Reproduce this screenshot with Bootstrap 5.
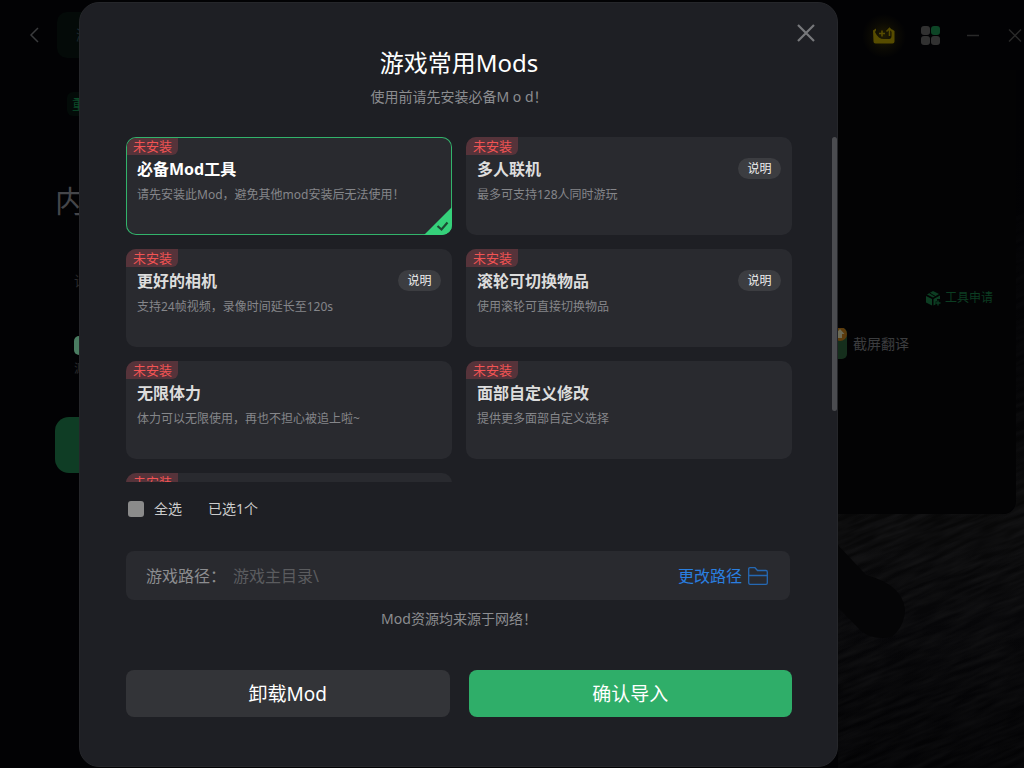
<!DOCTYPE html>
<html lang="zh-CN">
<head>
<meta charset="utf-8">
<meta name="viewport" content="width=device-width, initial-scale=1">
<title>游戏常用Mods</title>
<link href="https://cdn.jsdelivr.net/npm/bootstrap@5.3.0/dist/css/bootstrap.min.css" rel="stylesheet">
<style>
  body { background: #020204; color: #ddd; font-family: "Noto Sans", "Noto Sans CJK SC", sans-serif; font-size: 14px; line-height: 20px; }
  button, input { font-family: inherit; }
  .stage { display: grid; min-height: 100vh; overflow: hidden; }
  .stage > * { grid-area: 1 / 1; min-width: 0; }
  .plain { background: none; border: 0; padding: 0; line-height: 0; }

  /* dimmed launcher page */
  .launcher { display: grid; grid-template-rows: 70px 1fr; }
  .scene { width: 100%; height: 100%; }
  .topbar { padding: 0 2px 0 28px; }
  .tab-item { background: #040a08; color: #1b2930; border-radius: 10px; width: 120px; height: 46px; padding-left: 19px; font-size: 14px; display: flex; align-items: center; }
  .left-side { padding: 22px 0 0 55px; white-space: nowrap; }
  .hot-tag { background: #030b08; color: #0b4a28; border-radius: 6px; margin-left: 12px; padding: 2px 5px; font-size: 13px; display: inline-block; }
  .game-name { color: #45464a; font-size: 30px; line-height: 40px; margin: 65px 0 50px; font-weight: 400; }
  .dim-line { color: #29292b; padding-left: 19px; font-size: 14px; }
  .dim-note { font-size: 12px; }
  .toggle-chip { background: #4a7c61; border-radius: 5px; width: 36px; height: 19px; margin: 45px 0 4px 19px; }
  .start-btn { background: #0f3d25; border: 0; border-radius: 14px; width: 220px; height: 56px; margin-top: 38px; }
  .side-card { width: 188px; height: 444px; margin-right: 8px; background: #030304; border-radius: 0 0 14px 0; padding-top: 218px; }
  .apply-link { color: #0c3d22; font-size: 12px; text-decoration: none; margin-right: 23px; }
  .tool-line { color: #3c3d3f; margin-top: 20px; gap: 6px; height: 32px; }

  /* dialog */
  .sheet { background: #1e1f24; border: 1px solid #25262a; border-radius: 20px; margin: 2px 186px 1px 79px; display: flex; flex-direction: column; padding: 20px 0 48px 46px; }
  .sheet-head { padding-right: 21px; }
  .sheet-title { font-size: 24px; line-height: 32px; color: #fff; font-weight: 400; margin: 4px 0 8px; }
  .sheet-body { padding-right: 45px; }
  .muted { color: #8c8d90; }
  .list-row { margin-top: 30px; height: 345px; }
  .mods { display: grid; grid-template-columns: 1fr 1fr; grid-auto-rows: 98px; gap: 14px; overflow: hidden; flex: 1; }
  .thumb { width: 5px; height: 274px; border-radius: 3px; background: #4b4c50; margin-left: 40px; }
  .mod { background: #292a2f; border-radius: 10px; position: relative; overflow: hidden; padding: 21px 11px; display: block; }
  .mod.on { box-shadow: inset 0 0 0 1px #32b36b; }
  .state { position: absolute; left: 0; top: 0; background: #56333a; color: #f25454; font-size: 13px; line-height: 18px; padding: 0 6px 0 7px; border-radius: 0 0 6px 0; }
  .mod.on .state { left: 1px; top: 1px; border-top-left-radius: 9px; line-height: 17px; padding-left: 6px; }
  .mod h2 { font-size: 16px; line-height: 22px; font-weight: 700; color: #ddd; margin: 0 0 6px; }
  .mod.on h2 { color: #fff; }
  .mod p { font-size: 12px; line-height: 18px; color: #85868a; margin: 0; }
  .info { background: #3c3d41; color: #eee; border: 0; border-radius: 11px; width: 43px; height: 21px; font-size: 12px; line-height: 18px; padding: 0; }
  .corner { position: absolute; right: 0; bottom: 0; }
  .all-box { appearance: none; width: 16px; height: 16px; background: #8b8b8b; border-radius: 3px; margin: 0 10px 0 2px; }
  .select-row { margin-top: 17px; color: #ccc; gap: 26px; }
  .path-row { background: #292a2f; border-radius: 8px; height: 49px; margin: 32px 2px 0 0; padding: 0 22px 0 20px; gap: 7px; font-size: 16px; }
  .path-row input { background: none; border: 0; color: #5b5c5f; outline: 0; padding: 0; flex: 1; min-width: 0; }
  .path-row a { color: #2a7fe0; text-decoration: none; gap: 6px; }
  .source-note { margin-top: 9px; }
  .actions { margin-top: 41px; gap: 19px; }
  .act { border: 0; border-radius: 8px; height: 47px; font-size: 19px; color: #fff; flex: 1; padding: 0; }
  .act-gray { background: #333438; }
  .act-green { background: #2fae69; }
  .act-gray:hover { background: #3d3e43; color: #fff; }
  .act-green:hover { background: #35bd73; color: #fff; }
</style>
</head>
<body>
<div class="stage">
  <svg class="scene" viewBox="0 0 1024 768" preserveAspectRatio="none" aria-hidden="true">
    <defs>
      <filter id="grain" x="0" y="0" width="100%" height="100%" color-interpolation-filters="sRGB">
        <feTurbulence type="fractalNoise" baseFrequency="0.025 0.2" numOctaves="3" seed="4"/>
        <feColorMatrix values="0 0 0 0 .075  0 0 0 0 .075  0 0 0 0 .08  2 0 0 0 -.6"/>
      </filter>
      <linearGradient id="floor" x1="0" y1="0" x2="0" y2="1"><stop offset="0" stop-color="#020203"/><stop offset=".6" stop-color="#080808"/><stop offset=".8" stop-color="#08080a"/><stop offset="1" stop-color="#040405"/></linearGradient>
      <linearGradient id="fade" x1="0" y1="0" x2="0" y2="1"><stop offset="0" stop-color="#020204"/><stop offset=".5" stop-color="#020204" stop-opacity=".5"/><stop offset=".65" stop-color="#020204" stop-opacity="0"/><stop offset="1" stop-color="#020204" stop-opacity=".5"/></linearGradient>
      <clipPath id="ground"><path d="M838 514H1005Q1016 512 1016 500V80H1024V768H838Z"/></clipPath>
    </defs>
    <rect width="1024" height="768" fill="#020204"/>
    <g clip-path="url(#ground)">
      <rect x="838" y="80" width="186" height="688" fill="url(#floor)"/>
      <g transform="rotate(-22 930 640)"><rect x="680" y="280" width="560" height="700" filter="url(#grain)"/></g>
      <rect x="838" y="80" width="186" height="688" fill="url(#fade)"/>
    </g>
    <path d="M838 545L866 575Q903 585 905 610Q904 628 891 637Q873 641 860 630L838 607Z" fill="#050506"/>
  </svg>

  <div class="launcher" aria-hidden="true">
    <header class="topbar d-flex align-items-center justify-content-between">
      <div class="d-flex align-items-center gap-3">
        <svg width="13" height="16" viewBox="0 0 13 16" fill="none" stroke="#3a3b3d" stroke-width="1.5"><path d="M10 1L3 8L10 15"/></svg>
        <div class="tab-item">游</div>
      </div>
      <div class="d-flex align-items-center">
        <svg width="50" height="50" viewBox="859 12 50 50" class="me-2">
          <defs><radialGradient id="glow"><stop offset="0" stop-color="#4a4000" stop-opacity=".4"/><stop offset=".6" stop-color="#4a4000" stop-opacity=".12"/><stop offset="1" stop-color="#4a4000" stop-opacity="0"/></radialGradient></defs>
          <circle cx="884" cy="38" r="22" fill="url(#glow)"/>
          <path d="M873 32.500L876 30.500V32.500L875 34Q876.500 37.500 879 39.500Q881 41 884 41H889Q891.500 41 891.500 38V31L894.500 33V43.500Q894.500 45.500 892.500 45.500H875.500Q873.500 45.500 873.500 43.500Z" fill="#574c00"/>
          <path d="M882 32.500V38.500M879 35.500H885M889.500 38V31M886.500 33.500L889.500 30.500L892.500 33.500" fill="none" stroke="#574c00" stroke-width="1.600"/>
        </svg>
        <svg width="19" height="19" viewBox="0 0 19 19" fill="#313131" class="ms-1"><rect width="9" height="9" rx="3"/><rect x="10" width="9" height="9" rx="3" fill="#0d4526"/><rect y="10" width="9" height="9" rx="3"/><rect x="10" y="10" width="9" height="9" rx="3"/></svg>
        <svg width="82" height="14" viewBox="940 28 82 14" fill="none" stroke="#292929" stroke-width="1.500"><path d="M967 35.500H979M1009 29.500L1021 41.500M1021 29.500L1009 41.500"/></svg>
      </div>
    </header>
    <div class="d-flex justify-content-between align-items-start">
      <div class="left-side">
        <span class="hot-tag">重</span>
        <h1 class="game-name">内</h1>
        <div class="dim-line">请</div>
        <div class="toggle-chip"></div>
        <div class="dim-line dim-note">源</div>
        <button class="start-btn" type="button" tabindex="-1" aria-label="启动"></button>
      </div>
      <div class="side-card">
        <a href="#" tabindex="-1" class="apply-link d-flex align-items-center justify-content-end gap-1">
          <svg width="15" height="15" viewBox="0 0 15 15" fill="#0c3d22"><path d="M1 3.500L7 0L13 3L7 6.500Z"/><path d="M0 5L6 8V14.500L0 11.500Z"/><path d="M7.500 8L14 4.500V8H11V10.500H9.500V13.500L7.500 14.500Z"/><path d="M12 9.500V14.500M9.500 12H14.500" stroke="#0c3d22" stroke-width="1.300"/><path d="M3.500 2L9.500 5.500" stroke="#030304"/></svg>工具申请</a>
        <div class="tool-line d-flex align-items-center">
          <svg width="19" height="32" viewBox="828 328 19 32"><rect x="828" y="328" width="19" height="31" rx="5" fill="#152e1c"/><circle cx="840" cy="334" r="7" fill="#5c3b0c"/><path d="M840 329L844.500 334H842V338H838V334H835.500Z" fill="#6b6a55"/></svg>
          <span>截屏翻译</span>
        </div>
      </div>
    </div>
  </div>

  <main class="sheet" role="dialog" aria-labelledby="dlg-title">
    <div class="sheet-head d-flex justify-content-end">
      <button class="plain" type="button" aria-label="关闭"><svg width="20" height="20" viewBox="0 0 20 20" fill="none" stroke="#77787b" stroke-width="2.200"><path d="M2 2L18 18M18 2L2 18"/></svg></button>
    </div>
    <div class="sheet-body text-center">
      <h1 class="sheet-title" id="dlg-title">游戏常用Mods</h1>
      <div class="muted">使用前请先安装必备M o d！</div>
    </div>

    <div class="list-row d-flex align-items-start">
      <div class="mods h-100">
        <article class="mod on"><span class="state">未安装</span><h2>必备Mod工具</h2><p>请先安装此Mod，避免其他mod安装后无法使用！</p>
          <svg class="corner" width="28" height="28" viewBox="0 0 28 28"><path d="M28 0V28H0Z" fill="#35d07a"/><path d="M13.500 19L17.500 22.500L23.500 15.500" fill="none" stroke="#1c4a33" stroke-width="2.200"/></svg></article>
        <article class="mod"><span class="state">未安装</span><div class="d-flex justify-content-between"><h2>多人联机</h2><button class="info" type="button">说明</button></div><p>最多可支持128人同时游玩</p></article>
        <article class="mod"><span class="state">未安装</span><div class="d-flex justify-content-between"><h2>更好的相机</h2><button class="info" type="button">说明</button></div><p>支持24帧视频，录像时间延长至120s</p></article>
        <article class="mod"><span class="state">未安装</span><div class="d-flex justify-content-between"><h2>滚轮可切换物品</h2><button class="info" type="button">说明</button></div><p>使用滚轮可直接切换物品</p></article>
        <article class="mod"><span class="state">未安装</span><h2>无限体力</h2><p>体力可以无限使用，再也不担心被追上啦~</p></article>
        <article class="mod"><span class="state">未安装</span><h2>面部自定义修改</h2><p>提供更多面部自定义选择</p></article>
        <article class="mod"><span class="state">未安装</span></article>
      </div>
      <div class="thumb"></div>
    </div>

    <div class="sheet-body">
      <div class="select-row d-flex align-items-center">
        <label class="d-flex align-items-center"><input class="all-box" type="checkbox">全选</label>
        <span>已选1个</span>
      </div>
      <div class="path-row d-flex align-items-center">
        <label class="muted" for="game-path">游戏路径：</label>
        <input id="game-path" type="text" value="游戏主目录\" readonly>
        <a href="#" class="d-flex align-items-center">更改路径
          <svg width="20" height="18" viewBox="0 0 20 18" fill="none" stroke="#2568b3" stroke-width="1.300"><path d="M.7 15.500V2Q.7.700 2 .7H7L9.500 3.500H18Q19.300 3.500 19.300 5V16Q19.300 17.300 18 17.300H2Q.7 17.300.7 15.500ZM.7 8.500H19.300"/></svg></a>
      </div>
      <div class="source-note text-center muted">Mod资源均来源于网络！</div>
      <div class="actions d-flex">
        <button class="act act-gray" type="button">卸载Mod</button>
        <button class="act act-green" type="button">确认导入</button>
      </div>
    </div>
  </main>
</div>
<script src="https://cdn.jsdelivr.net/npm/bootstrap@5.3.0/dist/js/bootstrap.bundle.min.js"></script>
</body>
</html>
